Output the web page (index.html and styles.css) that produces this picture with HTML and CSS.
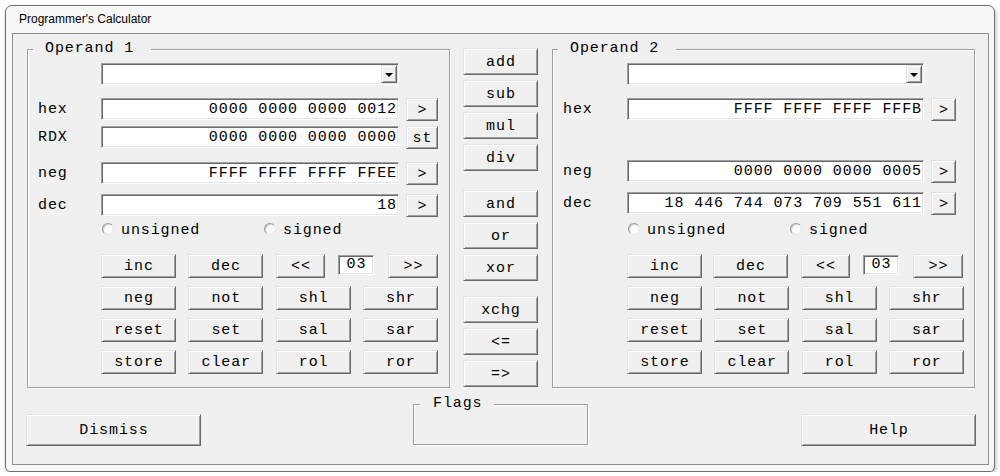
FILE: index.html
```html
<!DOCTYPE html>
<html>
<head>
<meta charset="utf-8">
<title>Programmer's Calculator</title>
<link rel="stylesheet" href="styles.css">
</head>
<body>
<div class="window">
  <div class="titlebar">Programmer's Calculator</div>
  <div class="client">
    <div class="top">
      <div class="group op op1">
        <span class="legend">Operand 1</span>
        <div class="row r-combo"><span></span><div class="combo"><span class="drop"><i></i></span></div></div>
        <div class="row r-hex"><span class="lbl">hex</span><div class="field">0000 0000 0000 0012</div><button class="btn side">&gt;</button></div>
        <div class="row r-rdx"><span class="lbl">RDX</span><div class="field">0000 0000 0000 0000</div><button class="btn side">st</button></div>
        <div class="row r-neg"><span class="lbl">neg</span><div class="field">FFFF FFFF FFFF FFEE</div><button class="btn side">&gt;</button></div>
        <div class="row r-dec"><span class="lbl">dec</span><div class="field">18</div><button class="btn side">&gt;</button></div>
        <div class="row r-radio"><span></span>
          <div class="radios">
            <label class="radio r-uns"><span class="dot"></span>unsigned</label>
            <label class="radio"><span class="dot"></span>signed</label>
          </div>
        </div>
        <div class="brow1">
          <button class="btn b75 m12">inc</button><button class="btn b75 m13">dec</button><button class="btn b49 m13">&lt;&lt;</button><div class="count m14">03</div><button class="btn b50">&gt;&gt;</button>
        </div>
        <div class="bgrid">
          <button class="btn">neg</button><button class="btn">not</button><button class="btn">shl</button><button class="btn">shr</button>
          <button class="btn">reset</button><button class="btn">set</button><button class="btn">sal</button><button class="btn">sar</button>
          <button class="btn">store</button><button class="btn">clear</button><button class="btn">rol</button><button class="btn">ror</button>
        </div>
      </div>

      <div class="middle">
        <button class="btn mid">add</button>
        <button class="btn mid">sub</button>
        <button class="btn mid">mul</button>
        <button class="btn mid">div</button>
        <button class="btn mid sep1">and</button>
        <button class="btn mid">or</button>
        <button class="btn mid">xor</button>
        <button class="btn mid sep2">xchg</button>
        <button class="btn mid">&lt;=</button>
        <button class="btn mid">=&gt;</button>
      </div>

      <div class="group op op2">
        <span class="legend">Operand 2</span>
        <div class="row r-combo"><span></span><div class="combo"><span class="drop"><i></i></span></div></div>
        <div class="row r-hex"><span class="lbl">hex</span><div class="field">FFFF FFFF FFFF FFFB</div><button class="btn side">&gt;</button></div>
        <div class="row r-neg2"><span class="lbl">neg</span><div class="field">0000 0000 0000 0005</div><button class="btn side">&gt;</button></div>
        <div class="row r-dec"><span class="lbl">dec</span><div class="field">18 446 744 073 709 551 611</div><button class="btn side">&gt;</button></div>
        <div class="row r-radio2"><span></span>
          <div class="radios">
            <label class="radio r-uns"><span class="dot"></span>unsigned</label>
            <label class="radio"><span class="dot"></span>signed</label>
          </div>
        </div>
        <div class="brow1">
          <button class="btn b75 m11">inc</button><button class="btn b75 m13">dec</button><button class="btn b49 m13">&lt;&lt;</button><div class="count m14">03</div><button class="btn b50">&gt;&gt;</button>
        </div>
        <div class="bgrid">
          <button class="btn">neg</button><button class="btn">not</button><button class="btn">shl</button><button class="btn">shr</button>
          <button class="btn">reset</button><button class="btn">set</button><button class="btn">sal</button><button class="btn">sar</button>
          <button class="btn">store</button><button class="btn">clear</button><button class="btn">rol</button><button class="btn">ror</button>
        </div>
      </div>
    </div>

    <div class="bottom">
      <button class="btn big dismiss">Dismiss</button>
      <div class="group flags"><span class="legend">Flags</span></div>
      <button class="btn big help">Help</button>
    </div>
  </div>
</div>
</body>
</html>
```

FILE: styles.css
```css
* { box-sizing: border-box; }

html, body {
  margin: 0;
  background: #ffffff;
}

body {
  font-family: "Liberation Mono", "Courier New", monospace;
  font-size: 15px;
  letter-spacing: 0.9px;
  color: #000;
}

.window {
  margin: 5px 0 0 5px;
  width: 990px;
  height: 467px;
  border: 1px solid #6f6f6f;
  border-radius: 7px 7px 5px 5px;
  background: #f7f7f7;
  padding: 0 5px 6px 6px;
  box-shadow: 1px 2px 4px rgba(0, 0, 0, 0.28);
  display: flex;
  flex-direction: column;
}

.titlebar {
  height: 27px;
  line-height: 26px;
  padding-left: 7px;
  font-family: "Liberation Sans", Arial, sans-serif;
  font-size: 12px;
  letter-spacing: 0;
  color: #000;
}

.client {
  height: 432px;
  border: 1px solid #8e8f8f;
  background: #f0f0f0;
  display: flex;
  flex-direction: column;
}

.top {
  display: flex;
  align-items: flex-start;
  margin-top: 14px;
  height: 340px;
}

.group {
  position: relative;
  border: 1px solid #a0a0a0;
  box-shadow: inset 1px 1px 0 #fff, 1px 1px 0 #fff;
}

.legend {
  position: absolute;
  top: -11px;
  left: 5px;
  height: 20px;
  line-height: 20px;
  background: #f0f0f0;
  padding: 0 17px 0 12px;
  white-space: pre;
}

.op {
  width: 423px;
  height: 339px;
  margin-top: 1px;
  display: flex;
  flex-direction: column;
}

.op1 { margin-left: 14px; }
.op2 { margin-left: 14px; }

.row {
  display: grid;
  grid-template-columns: 63px 298px 7px 32px;
  padding-left: 10px;
  align-items: start;
}

.row > :nth-child(3) { grid-column: 4; }

.op2 .row {
  grid-template-columns: 64px 297px 7px 25px;
}

.r-combo { margin-top: 13px; }
.r-hex { margin-top: 13px; }
.r-rdx { margin-top: 5px; }
.r-neg { margin-top: 13px; }
.r-neg2 { margin-top: 39px; }
.r-dec { margin-top: 9px; }
.r-radio { margin-top: 2px; }
.r-radio2 { margin-top: 4px; }

.lbl {
  height: 22px;
  padding-top: 2px;
  line-height: 20px;
  white-space: pre;
}

.field {
  height: 22px;
  background: #fff;
  border: 1px solid;
  border-color: #a0a0a0 #fff #fff #a0a0a0;
  box-shadow: inset 1px 1px 0 #696969, inset -1px -1px 0 #e3e3e3;
  text-align: right;
  padding: 2px 1px 0 0;
  line-height: 18px;
  white-space: pre;
}

.combo {
  height: 22px;
  background: #fff;
  border: 1px solid;
  border-color: #a0a0a0 #fff #fff #a0a0a0;
  box-shadow: inset 1px 1px 0 #696969, inset -1px -1px 0 #e3e3e3;
  display: flex;
  justify-content: flex-end;
  padding: 1px 1px 1px 0;
}

.drop {
  width: 16px;
  height: 18px;
  background: #f0f0f0;
  border: 1px solid;
  border-color: #e3e3e3 #696969 #696969 #e3e3e3;
  box-shadow: inset 1px 1px 0 #fff, inset -1px -1px 0 #a0a0a0;
  display: flex;
  align-items: center;
  justify-content: center;
}

.drop i {
  display: block;
  width: 0;
  height: 0;
  border-left: 4px solid transparent;
  border-right: 4px solid transparent;
  border-top: 4px solid #000;
  margin-top: 1px;
}

.btn {
  font: inherit;
  letter-spacing: 0.9px;
  text-indent: 0.9px;
  color: #000;
  background: #f0f0f0;
  border: 1px solid;
  border-color: #e3e3e3 #696969 #696969 #e3e3e3;
  box-shadow: inset 1px 1px 0 #fff, inset -1px -1px 0 #a0a0a0;
  padding: 2px 0 0 0;
  margin: 0;
  border-radius: 0;
  white-space: pre;
  line-height: 18px;
}

.side { height: 23px; }

.radios {
  display: flex;
  height: 20px;
  align-items: center;
}

.radio {
  display: flex;
  align-items: center;
  height: 20px;
  padding-top: 2px;
}

.r-uns { width: 162px; }

.dot {
  width: 12px;
  height: 12px;
  margin: -2px 7px 0 1px;
  border-radius: 50%;
  background: #fbfbfb;
  border: 1px solid;
  border-color: #9a9a9a #e6e6e6 #e6e6e6 #9a9a9a;
  box-shadow: inset 1px 1px 0 #d0d0d0;
}

.brow1 {
  display: flex;
  align-items: flex-start;
  margin-top: 15px;
  padding-left: 73px;
}

.op2 .brow1 { padding-left: 74px; }

.brow1 .btn { height: 24px; }

.b75 { width: 75px; }
.b49 { width: 49px; }
.b50 { width: 50px; }
.m11 { margin-right: 11px; }
.m12 { margin-right: 12px; }
.m13 { margin-right: 13px; }
.m14 { margin-right: 14px; }

.count {
  width: 36px;
  height: 20px;
  margin-top: 1px;
  background: #fff;
  border: 1px solid;
  border-color: #a0a0a0 #fff #fff #a0a0a0;
  box-shadow: inset 1px 1px 0 #696969, inset -1px -1px 0 #e3e3e3;
  text-align: center;
  text-indent: 0.9px;
  line-height: 18px;
}

.bgrid {
  display: grid;
  grid-template-columns: repeat(4, 75px);
  grid-auto-rows: 24px;
  column-gap: 12.33px;
  row-gap: 8px;
  margin-top: 8px;
  padding-left: 73px;
}

.op2 .bgrid { padding-left: 74px; }

.middle {
  margin-left: 13px;
  width: 75px;
  display: flex;
  flex-direction: column;
  gap: 5px;
}

.mid { height: 27px; }
.sep1 { margin-top: 14px; }
.sep2 { margin-top: 10px; }

.bottom {
  display: flex;
  align-items: flex-start;
  margin-top: 16px;
}

.big {
  height: 32px;
  width: 175px;
  margin-top: 10px;
}

.dismiss { margin-left: 13px; }

.flags {
  margin-left: 212px;
  width: 175px;
  height: 41px;
}

.flags .legend {
  top: -11px;
  left: 6px;
  padding: 0 11px 0 13px;
}

.help { margin-left: 213px; }
```
